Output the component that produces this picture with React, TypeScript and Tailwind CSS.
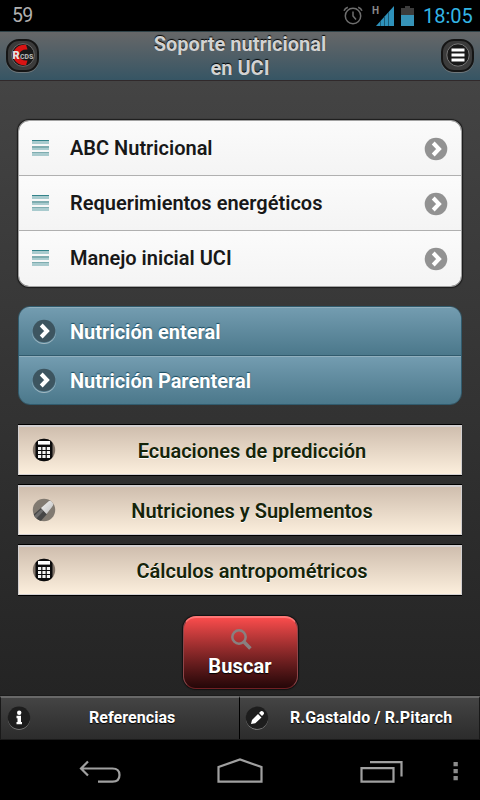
import React from "react";

const Chevron: React.FC<{ circle: string }> = ({ circle }) => (
  <svg className="block w-6 h-6 shrink-0" viewBox="0 0 24 24">
    <circle cx="12" cy="12" r="11.3" fill={circle} />
    <path d="M9.2 6L15 12L9.2 18" fill="none" stroke="#fff" strokeWidth="4" />
  </svg>
);

const Bars: React.FC = () => (
  <svg className="block w-[17px] h-4 shrink-0" viewBox="0 0 17 16" shapeRendering="crispEdges">
    {[0, 6, 12].map((y, idx) => (
      <g key={y}>
        <rect y={y} width="17" height="4" fill="#a9cbce" />
        <rect y={y} width="17" height={idx === 1 ? 2 : 1} fill={idx === 0 ? "#34838a" : "#7fadb0"} />
      </g>
    ))}
  </svg>
);

const Calculator: React.FC = () => (
  <svg className="block w-6 h-6 shrink-0" viewBox="0 0 24 24">
    <defs>
      <clipPath id="round">
        <circle cx="12" cy="12" r="11.2" />
      </clipPath>
    </defs>
    <g clipPath="url(#round)">
      <rect width="24" height="24" fill="#817469" />
      <rect x="3.5" width="17" height="24" rx="1" fill="#0b0b0c" />
      <rect x="6" y="3" width="12" height="3.6" fill="#fff" />
      {[9, 13, 17].map((y) =>
        [6, 10.4, 14.8].map((x) => <rect key={`${x}-${y}`} x={x} y={y} width="3.2" height="3" fill="#f4f4f4" />)
      )}
    </g>
  </svg>
);

const Tube: React.FC = () => (
  <svg className="block w-6 h-6 shrink-0" viewBox="0 0 24 24">
    <defs>
      <linearGradient id="cap" x1="0" y1="0" x2="1" y2="1">
        <stop offset="0" stopColor="#f5f5f5" />
        <stop offset="1" stopColor="#bcbcbc" />
      </linearGradient>
      <clipPath id="disc">
        <circle cx="12" cy="12" r="11.2" />
      </clipPath>
    </defs>
    <g clipPath="url(#disc)">
      <rect width="24" height="24" fill="#817a71" />
      <path d="M1 17L9 10L15 16L8 24H2Z" fill="#464646" />
      <path d="M2 18L9.5 11L11.5 13L4 21Z" fill="#6c6c6c" />
      <path d="M9 10L17 3Q20 2 21 5Q22 7 20 9L14.5 16Z" fill="url(#cap)" />
    </g>
  </svg>
);

const StatusBar: React.FC = () => (
  <div className="flex h-[31px] items-center bg-black">
    <span className="ml-3 mt-px text-[19.5px] tracking-[-0.8px] text-[#b0b0b0]">59</span>
    <svg className="ml-auto block w-5 h-[19px]" viewBox="0 0 20 19" fill="none" stroke="#6e6e6e" strokeWidth="1.5">
      <circle cx="10" cy="10" r="7.7" />
      <path d="M10 5.5V10L13 13.5M1 4.8Q2 2.3 4.8 1.2M19 4.8Q18 2.3 15.2 1.2" />
    </svg>
    <div className="ml-[9px] relative w-[22px] h-5">
      <svg className="block w-[22px] h-5" viewBox="0 0 22 20">
        <path d="M4 20L22 0V20Z" fill="#2e91ba" />
        <path d="M8.5 15V20M12.5 10.5V20M16.5 6V20" stroke="#1b5a74" strokeWidth="1" />
      </svg>
      <span className="absolute left-0 top-0 text-[10px] leading-[10px] font-bold text-[#8a8a8a]">H</span>
    </div>
    <svg className="ml-[7px] block w-[13px] h-5" viewBox="0 0 13 20">
      <path d="M4 0H9V2H13V10H0V2H4Z" fill="#3c3c3c" />
      <rect y="9" width="13" height="11" fill="#3693b8" />
    </svg>
    <span className="ml-[9px] mr-2 mt-px w-[49px] whitespace-nowrap text-[20px] text-[#33b5e5]">18:05</span>
  </div>
);

const Header: React.FC = () => (
  <header className="flex h-[50px] items-center justify-between border-t border-b border-t-[#2f4248] border-b-[#30292b] bg-linear-to-b from-[#666768] to-[#365564] px-1.5">
    <div className="mb-0.5 flex w-[33px] h-[33px] items-center justify-center rounded-[13px] border-2 border-[#151515] bg-[#3b3b3b] shadow-[0_1px_0_#6e777b]">
      <svg className="block w-6 h-6 shrink-0 overflow-visible" viewBox="0 0 24 24">
        <circle cx="12" cy="12" r="11.4" fill="#191919" stroke="#777" strokeWidth=".8" />
        <path d="M15 1.8L16.5 6.5Q9 6 8 12Q9 18 16.5 17.5L15 22.2Q7 22.5 3.5 17Q0 12 3.5 7Q7 1.5 15 1.8Z" fill="#d91414" />
        <text y="15.6" fontWeight="900">
          <tspan x="1.5" fill="#e2e2e2" fontSize="11">R</tspan>
          <tspan x="9" fill="#b0b0b0" fontSize="7">CDS</tspan>
        </text>
      </svg>
    </div>
    <h1 className="w-[190px] text-center text-[20px] font-bold leading-6 text-[#d2d2d2] [text-shadow:0_-1px_1px_#000]">
      Soporte nutricional
      <br />
      en UCI
    </h1>
    <button className="mb-0.5 flex w-[33px] h-[33px] items-center justify-center rounded-[13px] border-2 border-[#151515] bg-[#3b3b3b] shadow-[0_1px_0_#6e777b]">
      <svg className="block w-6 h-6 shrink-0" viewBox="0 0 24 24">
        <circle cx="12" cy="12" r="11.2" fill="#191919" stroke="#777" strokeWidth="1" />
        <path d="M5.5 7H18.5M5.5 12H18.5M5.5 17H18.5" stroke="#fff" strokeWidth="3" />
      </svg>
    </button>
  </header>
);

const App: React.FC = () => {
  return (
    <div className="flex h-[800px] w-[480px] flex-col overflow-hidden bg-black font-[Roboto,sans-serif]">
      <StatusBar />
      <Header />

      <main className="flex h-[614px] flex-col bg-linear-to-b from-[#444] to-[#242424] px-[18px] pt-[39px]">
        <ul className="overflow-hidden rounded-[11px] border border-[#a3a3a3] shadow-[0_0_1px_1px_#1c1c1c]">
          {["ABC Nutricional", "Requerimientos energéticos", "Manejo inicial UCI"].map((label, idx) => (
            <li
              key={label}
              className={`flex items-center bg-linear-to-b from-[#fbfbfb] to-[#f4f4f4] pl-[13px] pr-[13px] ${
                idx < 2 ? "h-[55px] border-b border-[#b0b0b0]" : "h-[55px] pb-px"
              }`}
            >
              <Bars />
              <span className="ml-[21px] flex-1 text-[20px] font-semibold text-[#181818]">{label}</span>
              <div className="pt-px">
                <Chevron circle="#929292" />
              </div>
            </li>
          ))}
        </ul>

        <ul className="mt-[19px] overflow-hidden rounded-[12px] border border-[#315b6d]">
          {["Nutrición enteral", "Nutrición Parenteral"].map((label, idx) => (
            <li
              key={label}
              className={`flex items-center border-t border-t-[#91afbd] bg-linear-to-b from-[#739cb0] to-[#4b788b] px-[13px] ${
                idx === 0 ? "h-[49px] border-b border-b-[#315b6d]" : "h-12"
              }`}
            >
              <div className="mb-px rounded-full shadow-[0_1px_0_#a3bac4]">
                <Chevron circle="#3d5560" />
              </div>
              <span className="ml-[14px] text-[20px] font-bold text-white [text-shadow:0_-1px_1px_#194b60]">{label}</span>
            </li>
          ))}
        </ul>

        <div className="mt-5 flex flex-col gap-[10px]">
          {[
            { icon: <Calculator />, label: "Ecuaciones de predicción" },
            { icon: <Tube />, label: "Nutriciones y Suplementos" },
            { icon: <Calculator />, label: "Cálculos antropométricos" },
          ].map((val) => (
            <button
              key={val.label}
              className="flex h-[50px] items-center border border-t-2 border-[#d2cfd0] bg-linear-to-b from-[#cfbeae] to-[#fcefdd] px-[13px] pb-px shadow-[0_-1px_0_#000,0_1px_0_#000]"
            >
              {val.icon}
              <span className="flex-1 pt-px pr-6 pl-6 text-center text-[20px] font-semibold text-[#152409] [text-shadow:0_1px_0_#fff]">
                {val.label}
              </span>
            </button>
          ))}
        </div>

        <button className="mt-[21px] flex h-[73px] w-[115px] flex-col items-center self-center rounded-[13px] border border-t-2 border-[#8e4549] border-t-[#ff7776] border-b-[#712024] bg-linear-to-b from-[#f94c4c] to-[#250708] shadow-[0_0_1px_1px_#111]">
          <svg className="mt-[11px] ml-0.5 block w-[21px] h-[21px]" viewBox="0 0 21 21" fill="none" stroke="#898080">
            <circle cx="8" cy="8" r="6.7" strokeWidth="2.5" />
            <path d="M12.8 12.8L19.4 19.4" strokeWidth="3.6" />
          </svg>
          <span className="mt-1 text-[20px] font-bold leading-6 tracking-[0.1px] text-white [text-shadow:0_1px_1px_#000]">Buscar</span>
        </button>
      </main>

      <footer className="flex h-[45px] border-t border-b border-[#1b1b1b] text-[16px] font-bold text-white [text-shadow:0_1px_1px_#000]">
        <div className="flex w-[240px] items-center border-t-2 border-r border-l border-t-[#686868] border-r-black border-l-[#191919] bg-linear-to-b from-[#444] to-[#2c2c2c] px-1.5 pb-px">
          <svg className="block w-6 h-6" viewBox="0 0 24 24">
            <circle cx="12" cy="12.8" r="11" fill="#8b8b8b" />
            <circle cx="12" cy="11.8" r="11.2" fill="#1d1d1d" />
            <path d="M9.5 9.8H14V16H15V18.3H9.5V16H10.5V12.2H9.5Z" fill="#fff" />
            <circle cx="12.2" cy="6.8" r="2.2" fill="#fff" />
          </svg>
          <span className="ml-[58px] pb-px tracking-[0.05px]">Referencias</span>
        </div>
        <div className="flex w-[240px] items-center border-t-2 border-r border-t-[#686868] border-r-[#191919] bg-linear-to-b from-[#444] to-[#2c2c2c] px-[5px] pb-px">
          <svg className="block w-6 h-6" viewBox="0 0 24 24">
            <circle cx="12" cy="12.8" r="11" fill="#8b8b8b" />
            <circle cx="12" cy="11.8" r="11.2" fill="#1d1d1d" />
            <path d="M6 18L7 14L13 8L16.5 11.5L10.3 17.3ZM14 7L15.8 5.2Q17 4.5 18.3 5.7Q19.5 7 18.7 8.2L17 10Z" fill="#fff" />
          </svg>
          <span className="ml-[21px] pb-px tracking-[0.15px]">R.Gastaldo / R.Pitarch</span>
        </div>
      </footer>

      <nav className="h-[60px] bg-black">
        <svg className="block w-[480px] h-[60px]" viewBox="0 0 480 60" fill="none" stroke="#a0a0a0" strokeWidth="2.2">
          <path d="M88 21.5L81 28.5L88 35.5M81.5 28.5H112.5Q119.5 28.5 119.5 35Q119.5 41.7 112.5 41.7H98" />
          <path d="M218.5 41.7V27L240 19.5L261.5 27V41.7Z" />
          <path d="M361.5 28.2H393.5V41.7H361.5ZM370 22.2H401.5V36.5" />
          <path d="M453.5 24.2H457.8M453.5 31.2H457.8M453.5 38.2H457.8" stroke="#8c8c8c" strokeWidth="4.2" />
        </svg>
      </nav>
    </div>
  );
};

export default App;
